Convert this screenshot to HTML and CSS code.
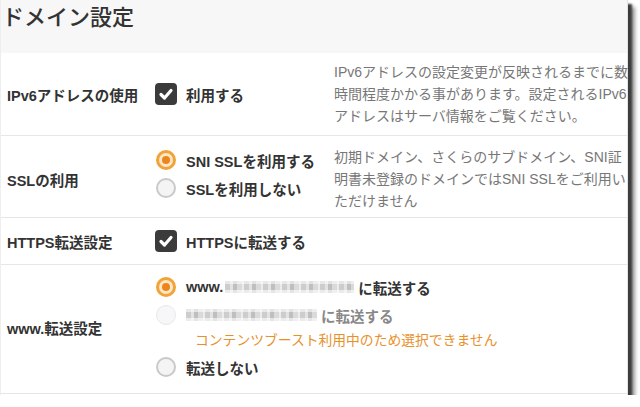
FILE: index.html
```html
<!DOCTYPE html>
<html lang="ja">
<head>
    <meta charset="UTF-8">
    <meta name="viewport" content="width=device-width, initial-scale=1.0">
    <title>ドメイン設定</title>
    <link rel="stylesheet" href="styles.css">
</head>
<body>

<div class="frame">
    <div class="head"><h1>ドメイン設定</h1></div>

    <div class="row r-ipv6">
        <div class="label">IPv6アドレスの使用</div>
        <div class="opts">
            <div class="opt"><span class="check"><svg viewBox="0 0 22 22" width="22" height="22"><polyline points="6,11.5 9.5,15 16,7.5" /></svg></span>利用する</div>
        </div>
        <div class="desc">IPv6アドレスの設定変更が反映されるまでに数<br>時間程度かかる事があります。設定されるIPv6<br>アドレスはサーバ情報をご覧ください。</div>
    </div>

    <div class="row r-ssl">
        <div class="label">SSLの利用</div>
        <div class="opts top">
            <div class="opt"><span class="radio on"></span>SNI SSLを利用する</div>
            <div class="opt"><span class="radio"></span>SSLを利用しない</div>
        </div>
        <div class="desc">初期ドメイン、さくらのサブドメイン、SNI証<br>明書未登録のドメインではSNI SSLをご利用い<br>ただけません</div>
    </div>

    <div class="row r-https">
        <div class="label">HTTPS転送設定</div>
        <div class="opts">
            <div class="opt"><span class="check"><svg viewBox="0 0 22 22" width="22" height="22"><polyline points="6,11.5 9.5,15 16,7.5" /></svg></span>HTTPSに転送する</div>
        </div>
        <div class="desc"></div>
    </div>

    <div class="row r-www">
        <div class="label">www.転送設定</div>
        <div class="opts wide">
            <div class="opt"><span class="radio on"></span>www.<span class="mask m1"></span>に転送する</div>
            <div class="opt off"><span class="radio dis"></span><span class="mask m2"></span>に転送する</div>
            <div class="warn">コンテンツブースト利用中のため選択できません</div>
            <div class="opt"><span class="radio"></span>転送しない</div>
        </div>
    </div>
</div>

</body>
</html>
```

FILE: styles.css
```css
body { margin: 0; background: #fff; color: #333; font-family: "Liberation Sans", "Noto Sans CJK JP", sans-serif; }

.frame { width: 628px; height: 395px; box-sizing: border-box; background: #fff; border-left: 1px solid #eee; border-right: 1px solid #e4e4e4; box-shadow: 4px 4px 2px #3c3c3c, 7px 7px 4px rgba(0, 0, 0, 0.4); }

.head { height: 53px; background: #f7f7f7; }
.head h1 { margin: 0; padding: 3px 0 0 1px; font-size: 22px; font-weight: 500; line-height: 30px; color: #333; }

.row { display: grid; grid-template-columns: 154px 179px 294px; align-items: center; border-bottom: 1px solid #e6e6e6; }
.r-ipv6 { padding: 8px 0; }
.r-ssl { padding: 10px 0 5px; }
.r-https { padding: 9px 0; }
.r-www { padding: 8px 0 12px; }

.label { padding-left: 6px; font-size: 14.5px; font-weight: bold; white-space: nowrap; }

.opts.top { align-self: start; }
.opts.wide { grid-column: 2 / 4; }

.opt { display: flex; align-items: center; height: 28px; font-size: 14.5px; font-weight: bold; white-space: nowrap; }
.opt.off { color: #888; }

.check { display: inline-block; width: 22px; height: 22px; margin-right: 9px; background: #3b3b3b; border-radius: 4px; }
.check svg { display: block; }
.check polyline { fill: none; stroke: #fff; stroke-width: 3.2; stroke-linecap: round; stroke-linejoin: round; }

.radio { position: relative; display: inline-block; width: 20px; height: 20px; box-sizing: border-box; margin: 0 10px 0 1px; border-radius: 50%; border: 2px solid #c9c9c9; background: #f4f4f4; }
.radio.on { border: 3px solid #f2a338; background: #fde7c6; }
.radio.on::after { content: ""; position: absolute; left: 3px; top: 3px; width: 8px; height: 8px; border-radius: 50%; background: #ec861c; }
.radio.dis { border: 1px solid #e8e8ec; background: #f7f7f9; }

.mask { display: inline-block; height: 12px; margin-right: 4px; background:
    linear-gradient(180deg, rgba(255,255,255,0.55) 0 3px, transparent 3px 9px, rgba(255,255,255,0.6) 9px),
    repeating-linear-gradient(90deg, #cdcdcd 0 5px, #e3e3e3 5px 8px, #bfbfbf 8px 12px, #dadada 12px 17px, #ececec 17px 19px); }
.mask.m1 { width: 129px; margin-left: 2px; }
.mask.m2 { width: 131px; }

.warn { height: 24px; padding-left: 40px; font-size: 13.8px; line-height: 24px; color: #e8912c; white-space: nowrap; }

.desc { font-size: 14px; line-height: 22px; color: #777; white-space: nowrap; }
```
